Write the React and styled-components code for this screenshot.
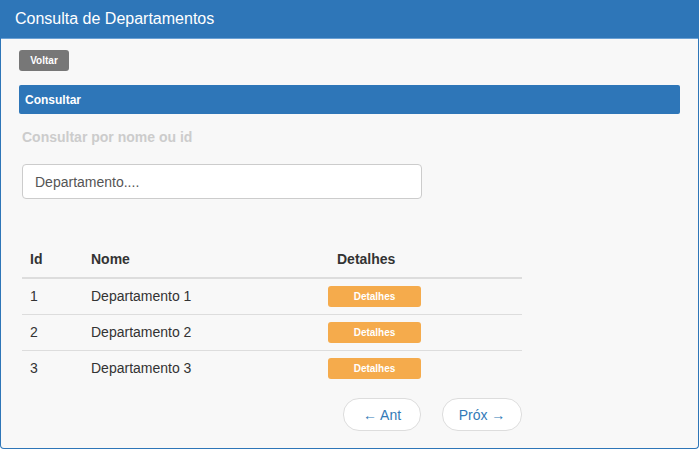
import React from "react";
import styled, { createGlobalStyle } from "styled-components";

const Global = createGlobalStyle`
  html, body { margin: 0; padding: 0; background: #ffffff; }
  body { font-family: "Liberation Sans", Arial, sans-serif; font-size: 14px; color: #333; }
  * { box-sizing: border-box; }
`;

const Panel = styled.div`
  width: 699px;
  height: 449px;
  border: 1px solid #2e76b8;
  border-top: none;
  border-radius: 0 0 4px 4px;
  background: #f8f8f8;
  display: flex;
  flex-direction: column;
  overflow: hidden;
`;

const Heading = styled.div`
  height: 39px;
  background: #2e76b8;
  color: #fff;
  font-size: 16px;
  display: flex;
  align-items: center;
  padding: 0 15px 1px;
  margin: 0 -1px;
  border-bottom: 1px solid #6aa0d4;
`;

const Body = styled.div`
  padding: 11px 18px 0 18px;
  display: flex;
  flex-direction: column;
`;

const Button = styled.button`
  font-family: "Liberation Sans", Arial, sans-serif;
  border: none;
  border-radius: 3px;
  color: #fff;
  font-weight: bold;
  cursor: pointer;
  padding: 0;
  background: ${(p) => (p.$variant === "warning" ? "#f5ab4c" : "#777777")};
  font-size: 10px;
  width: ${(p) => (p.$variant === "warning" ? "93px" : "50px")};
  height: 21px;
`;

const SectionBar = styled.div`
  margin-top: 14px;
  height: 29px;
  background: #2e76b8;
  border-radius: 2px;
  color: #fff;
  font-weight: bold;
  font-size: 12px;
  display: flex;
  align-items: center;
  padding-left: 6px;
  width: 661px;
`;

const Label = styled.div`
  margin: 15px 0 0 3px;
  color: #cccccc;
  font-weight: bold;
  font-size: 14px;
  height: 17px;
`;

const Input = styled.input`
  margin: 18px 0 0 3px;
  width: 400px;
  height: 35px;
  border: 1px solid #cccccc;
  border-radius: 4px;
  background: #fff;
  padding: 0 12px;
  font-family: "Liberation Sans", Arial, sans-serif;
  font-size: 14px;
  color: #555;
  &::placeholder { color: #555; }
`;

const Table = styled.table`
  margin: 40px 0 0 3px;
  width: 500px;
  border-collapse: collapse;
  font-size: 14px;
  color: #333;
`;

const Th = styled.th`
  text-align: left;
  font-weight: bold;
  height: 39px;
  padding: 2px 8px 0 ${(p) => p.$pl || "8px"};
  border-bottom: 2px solid #dddddd;
  width: ${(p) => p.$w || "auto"};
`;

const Td = styled.td`
  height: 36px;
  padding: 0 8px;
  border-top: ${(p) => (p.$first ? "none" : "1px solid #dddddd")};
  vertical-align: middle;
`;

const Pager = styled.div`
  width: 503px;
  margin-top: 12px;
  display: flex;
  justify-content: flex-end;
  gap: 21px;
`;

const PagerButton = styled.button`
  font-family: "Liberation Sans", Arial, sans-serif;
  background: #fff;
  border: 1px solid #dddddd;
  border-radius: 16px;
  height: 33px;
  width: ${(p) => p.$w};
  color: #337ab7;
  font-size: 14px;
  padding: 0;
  cursor: pointer;
`;

const rows = [
  { id: 1, nome: "Departamento 1" },
  { id: 2, nome: "Departamento 2" },
  { id: 3, nome: "Departamento 3" },
];

export default function App() {
  return (
    <>
      <Global />
      <Panel>
        <Heading>Consulta de Departamentos</Heading>
        <Body>
          <div>
            <Button>Voltar</Button>
          </div>
          <SectionBar>Consultar</SectionBar>
          <Label>Consultar por nome ou id</Label>
          <Input placeholder="Departamento...." />
          <Table>
            <thead>
              <tr>
                <Th $w="61px">Id</Th>
                <Th $w="237px">Nome</Th>
                <Th $pl="17px">Detalhes</Th>
              </tr>
            </thead>
            <tbody>
              {rows.map((r, i) => (
                <tr key={r.id}>
                  <Td $first={i === 0}>{r.id}</Td>
                  <Td $first={i === 0}>{r.nome}</Td>
                  <Td $first={i === 0}>
                    <Button $variant="warning">Detalhes</Button>
                  </Td>
                </tr>
              ))}
            </tbody>
          </Table>
          <Pager>
            <PagerButton $w="78px">← Ant</PagerButton>
            <PagerButton $w="80px">Próx →</PagerButton>
          </Pager>
        </Body>
      </Panel>
    </>
  );
}
